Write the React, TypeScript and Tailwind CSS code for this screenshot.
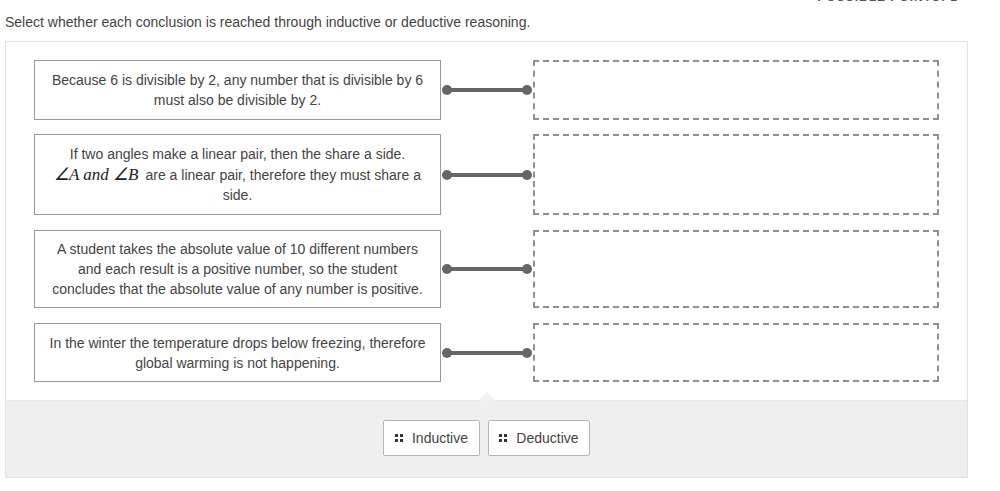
import React from 'react';

const statements: React.ReactNode[] = [
  <>Because 6 is divisible by 2, any number that is divisible by 6 must also be divisible by 2.</>,
  <>
    If two angles make a linear pair, then the share a side.
    <br />
    <span className="font-['Liberation_Serif',serif] italic text-[17px] leading-[21px] text-[#222]">
      ∠A and ∠B
    </span>
    <span className="ml-[7px]">are a linear pair, therefore they must share a side.</span>
  </>,
  <>A student takes the absolute value of 10 different numbers and each result is a positive number, so the student concludes that the absolute value of any number is positive.</>,
  <>In the winter the temperature drops below freezing, therefore global warming is not happening.</>,
];

const rows = ['h-[60px]', 'h-[81px] mt-[14px]', 'h-[78px] mt-[15px]', 'h-[59px] mt-[15px]'];

const Grip: React.FC = () => (
  <span className="grid grid-cols-2 gap-[2px] w-[8px] h-[8px]">
    <span className="bg-[#333] w-[3px] h-[3px]" />
    <span className="bg-[#333] w-[3px] h-[3px]" />
    <span className="bg-[#333] w-[3px] h-[3px]" />
    <span className="bg-[#333] w-[3px] h-[3px]" />
  </span>
);

const App: React.FC = () => {
  return (
    <div className="w-[1000px] h-[491px] bg-white font-['Liberation_Sans',Arial,sans-serif] text-[#444] overflow-hidden">
      {/* points label, scrolled mostly out of view at the top */}
      <div className="h-[12px] overflow-hidden flex justify-end pr-[42px]">
        <span className="-mt-[10px] text-[12px] font-bold tracking-[1px] text-[#555] leading-[14px]">
          POSSIBLE POINTS: 1
        </span>
      </div>

      <p className="pl-[5px] text-[14px] leading-[20px] text-[#444]">
        Select whether each conclusion is reached through inductive or deductive reasoning.
      </p>

      <div className="mt-[9px] ml-[5px] w-[963px] border border-[#e3e3e3] bg-white">
        {/* matching rows */}
        <div className="pt-[18px] pb-[18px] pl-[28px] flex flex-col">
          {statements.map((s, i) => (
            <div key={i} className={`flex items-stretch ${rows[i]}`}>
              <div className="w-[407px] border border-[#999] flex items-center justify-center px-[12px] text-center text-[14px] leading-[20px] text-[#444]">
                <div>{s}</div>
              </div>
              <div className="w-[92px] flex items-center px-[1px]">
                <span className="w-[10px] h-[10px] rounded-full bg-[#666] shrink-0" />
                <span className="flex-1 h-[4px] bg-[#666] -mx-[1px]" />
                <span className="w-[10px] h-[10px] rounded-full bg-[#666] shrink-0" />
              </div>
              <div className="w-[406px] border-2 border-dashed border-[#909090] bg-white" />
            </div>
          ))}
        </div>

        {/* answer tray */}
        <div className="relative bg-[#efefef] border-t border-[#e8e8e8] pt-[19px] pb-[21px] flex justify-center gap-[8px]">
          <span className="absolute left-[472px] -top-[9px] w-0 h-0 border-l-[9px] border-r-[9px] border-b-[9px] border-l-transparent border-r-transparent border-b-[#f2f2f2]" />
          <button className="h-[36px] w-[97px] bg-white border border-[#b5b5b5] rounded-[2px] flex items-center justify-center gap-[9px] text-[14px] text-[#444]">
            <Grip />
            Inductive
          </button>
          <button className="h-[36px] w-[102px] bg-white border border-[#b5b5b5] rounded-[2px] flex items-center justify-center gap-[9px] text-[14px] text-[#444]">
            <Grip />
            Deductive
          </button>
        </div>
      </div>
    </div>
  );
};

export default App;
